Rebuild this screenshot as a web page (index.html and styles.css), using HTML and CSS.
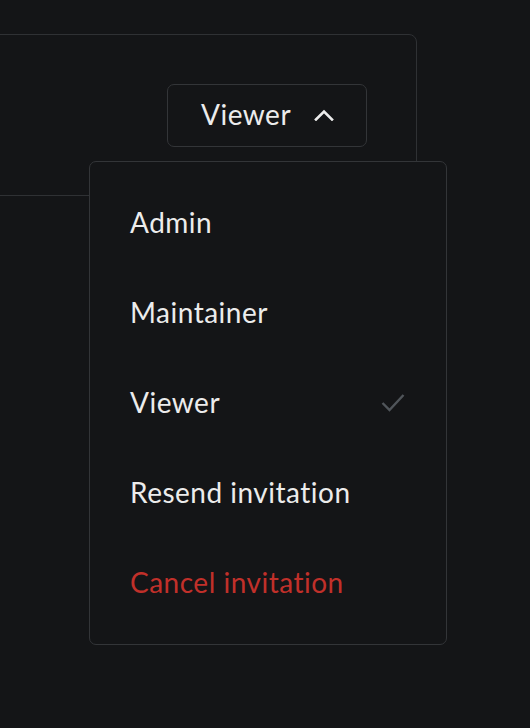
FILE: index.html
```html
<!DOCTYPE html>
<html lang="en">
<head>
<meta charset="utf-8">
<link rel="stylesheet" href="styles.css">
</head>
<body>
<div class="card">
  <div class="role-select">
    <button class="role-btn" type="button">
      <span>Viewer</span>
      <svg class="chev" width="20" height="12" viewBox="0 0 20 12"><path d="M2 10.5 L10 2.5 L18 10.5" fill="none" stroke="#ececec" stroke-width="2.6" stroke-linecap="square"/></svg>
    </button>
    <ul class="menu">
      <li class="item">Admin</li>
      <li class="item">Maintainer</li>
      <li class="item">Viewer
        <svg class="check" width="24" height="20" viewBox="0 0 24 20"><path d="M1.5 10 L8.5 17 L22.5 2" fill="none" stroke="#50555a" stroke-width="2.4"/></svg>
      </li>
      <li class="item">Resend invitation</li>
      <li class="item danger">Cancel invitation</li>
    </ul>
  </div>
</div>
</body>
</html>
```
FILE: styles.css
```css
html, body {
  margin: 0;
  padding: 0;
  background: #141517;
  height: 100%;
}
body {
  font-family: Lato, "Noto Sans", sans-serif;
  color: #ececec;
  overflow: hidden;
}
.card {
  box-sizing: border-box;
  margin: 34px 0 0 -20px;
  width: 437px;
  height: 162px;
  border: 1px solid #2f3134;
  border-radius: 8px;
  background: #141517;
  display: flex;
  justify-content: flex-end;
  align-items: flex-start;
  padding: 49px 49px 0 0;
}
.role-select {
  position: relative;
}
.role-btn {
  box-sizing: border-box;
  width: 200px;
  height: 63px;
  border: 1px solid #333538;
  border-radius: 7px;
  background: #141517;
  color: #ececec;
  font-family: inherit;
  font-size: 28px;
  display: flex;
  align-items: center;
  gap: 23px;
  padding: 0 0 3px 33px;
  letter-spacing: 0.5px;
}
.chev {
  display: block;
  margin-top: 2px;
}
.menu {
  position: absolute;
  top: calc(100% + 14px);
  right: -80px;
  box-sizing: border-box;
  width: 358px;
  margin: 0;
  padding: 16px 0;
  list-style: none;
  border: 1px solid #333538;
  border-radius: 7px;
  background: #141517;
}
.item {
  box-sizing: border-box;
  height: 90px;
  display: flex;
  align-items: center;
  justify-content: space-between;
  padding: 0 41px 3px 40px;
  font-size: 28px;
  letter-spacing: 0.5px;
}
.check {
  display: block;
  margin-top: 3px;
}
.danger {
  color: #c1302a;
}
```
